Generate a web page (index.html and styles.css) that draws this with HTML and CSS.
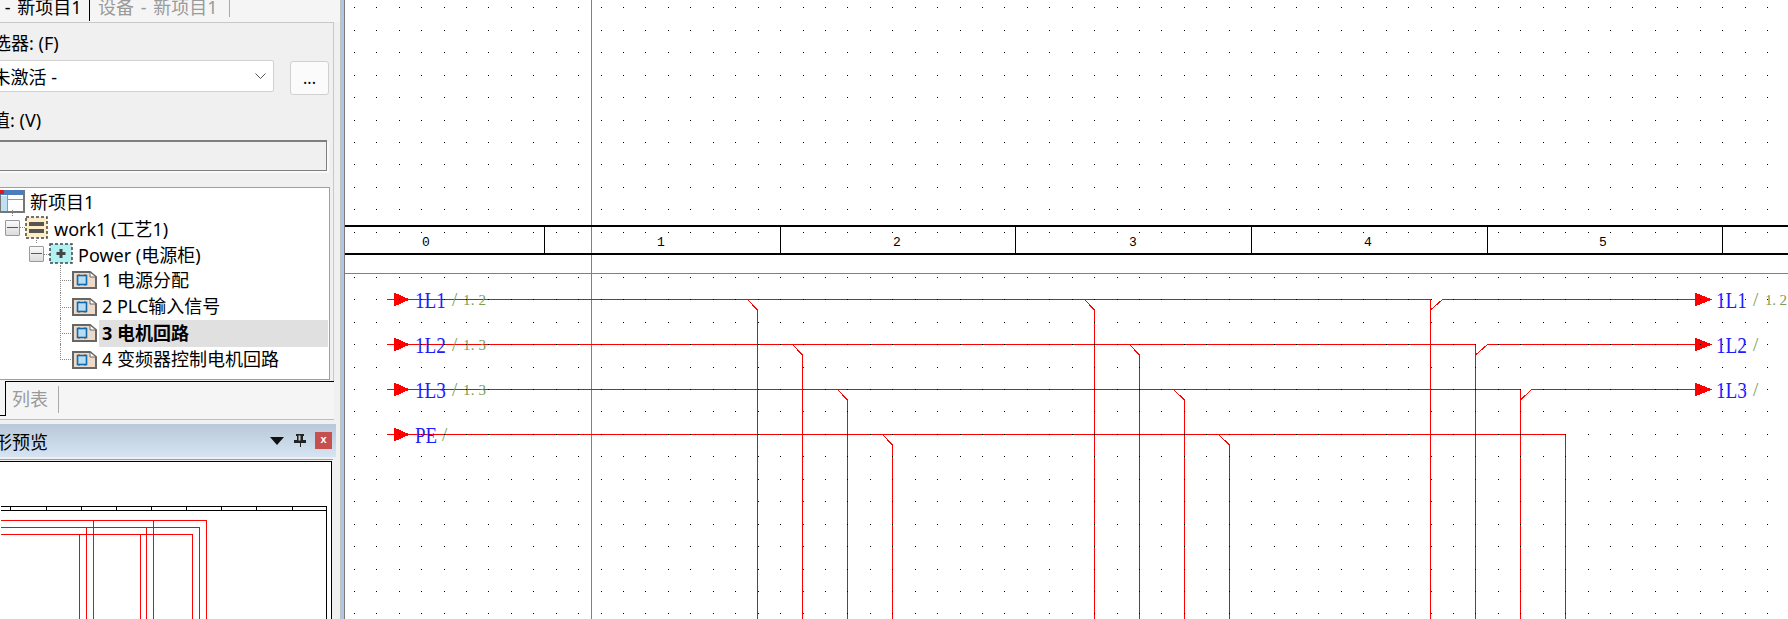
FILE: index.html
```html
<!DOCTYPE html>
<html lang="zh">
<head>
<meta charset="utf-8">
<title>电机回路</title>
<link rel="stylesheet" href="styles.css">
</head>
<body>

<div class="app">
  <div class="side">
    <div class="tabs">
      <span class="tab tab-on">项目 - 新项目1</span>
      <span class="tab tab-off">设备 - 新项目1</span>
    </div>

    <div class="panel">
      <div class="label label-filter">筛选器: (F)</div>
      <div class="filter-row">
        <div class="select">
          <span>- 未激活 -</span>
          <svg class="chevron" width="11" height="7" viewBox="0 0 11 7"><path d="M0.5 0.5 L5.5 5.5 L10.5 0.5" fill="none" stroke="#555"/></svg>
        </div>
        <button class="more">...</button>
      </div>
      <div class="label label-value">数值: (V)</div>
      <div class="value-box"></div>

      <div class="tree">
        <div class="row row-root">
          <svg class="icon-root" width="25" height="23" viewBox="0 0 25 23">
            <rect x="0" y="1" width="24" height="21" fill="#fff" stroke="#777" stroke-width="2"/>
            <rect x="0" y="0" width="24" height="5" fill="#4a7dba"/>
            <rect x="0" y="0" width="4" height="4" fill="#e8141c"/>
            <rect x="1" y="6" width="6" height="15" fill="#bfe0f2"/>
            <path d="M7.5 5 V21 M8 9.5 H23" stroke="#999" fill="none"/>
          </svg>
          <span>新项目1</span>
        </div>
        <div class="row row-work">
          <span class="toggle"><i></i></span>
          <svg class="icon-box" width="23" height="23" viewBox="0 0 23 23">
            <rect x="1" y="1" width="21" height="21" fill="#fdeec6" stroke="#444" stroke-width="1.5" stroke-dasharray="3 2"/>
            <rect x="4" y="6" width="15" height="4" fill="#555"/>
            <rect x="4" y="13" width="15" height="4" fill="#555"/>
          </svg>
          <span>work1 (工艺1)</span>
        </div>
        <div class="row row-power">
          <span class="toggle"><i></i></span>
          <svg class="icon-box" width="24" height="21" viewBox="0 0 24 21">
            <rect x="1" y="1" width="22" height="19" fill="#b2f1f2" stroke="#444" stroke-width="1.5" stroke-dasharray="3 2"/>
            <path d="M12 6 V15 M7.5 10.5 H16.5" stroke="#444" stroke-width="3" fill="none"/>
          </svg>
          <span>Power (电源柜)</span>
        </div>
        <div class="row row-page">
          <svg class="icon-page" width="25" height="18" viewBox="0 0 25 18"><use href="#page"/></svg>
          <span class="row-text">1 电源分配</span>
        </div>
        <div class="row row-page">
          <svg class="icon-page" width="25" height="18" viewBox="0 0 25 18"><use href="#page"/></svg>
          <span class="row-text">2 PLC输入信号</span>
        </div>
        <div class="row row-page row-current">
          <svg class="icon-page" width="25" height="18" viewBox="0 0 25 18"><use href="#page"/></svg>
          <span class="row-text">3 电机回路</span>
        </div>
        <div class="row row-page row-last">
          <svg class="icon-page" width="25" height="18" viewBox="0 0 25 18"><use href="#page"/></svg>
          <span class="row-text">4 变频器控制电机回路</span>
        </div>
      </div>
    </div>

    <div class="strip">
      <div class="strip-stub"></div>
      <div class="strip-tabs"><span class="strip-tab">列表</span></div>
    </div>

    <div class="titlebar">
      <span class="title">图形预览</span>
      <svg class="title-drop" width="14" height="10" viewBox="0 0 14 10"><path d="M0 1 H14 L7 9 Z" fill="#111"/></svg>
      <svg class="title-pin" width="12" height="13" viewBox="0 0 12 13"><path d="M2.5 0.5 H9.5 V1.5 H8.5 V6.5 H11.5 V8.5 H0.5 V6.5 H3.5 V1.5 H2.5 Z M6 8.5 V13" fill="#222" stroke="#222" shape-rendering="crispEdges"/><rect x="4.5" y="1.5" width="2" height="5" fill="#bcccdb"/></svg>
      <span class="title-close">x</span>
    </div>

    <div class="preview">
      <svg class="preview-svg" width="332" height="158" viewBox="0 461 332 158" shape-rendering="crispEdges">
        <path d="M0 506 H328.5 V619 M0 509.5 H328.5" fill="none" stroke="#000"/>
        <path d="M10.5 506 V509 M46.5 506 V509 M81.5 506 V509 M116.5 506 V509 M151.5 506 V509 M187.5 506 V509 M222.5 506 V509 M257.5 506 V509 M293.5 506 V509" fill="none" stroke="#000"/>
        <path d="M0 519.5 H207.5 V619 M0 526.5 H200.5 V619 M0 533.5 H193.5 V619 M79.5 534 V619 M86.5 527 V619 M93.5 520 V619 M140.5 534 V619 M146.5 527 V619 M153.5 520 V619" fill="none" stroke="#f00"/>
      </svg>
    </div>
  </div>

  <div class="splitter"></div>

  <div class="sheet">
    <svg id="sheet" class="sheet-svg" width="1443" height="619" viewBox="345 0 1443 619" shape-rendering="crispEdges">
      <!-- cursor cross -->
      <path d="M345 273.5 H1788 M591.5 0 V619" stroke="#808080" fill="none"/>

      <!-- column header -->
      <path d="M345 226 H1788 M345 254 H1788" stroke="#000" stroke-width="2" fill="none"/>
      <path d="M544.5 227 V253 M780.5 227 V253 M1015.5 227 V253 M1251.5 227 V253 M1487.5 227 V253 M1722.5 227 V253" stroke="#000" fill="none"/>
      <g class="col-num" text-anchor="middle">
        <text x="426" y="246">0</text>
        <text x="661" y="246">1</text>
        <text x="897" y="246">2</text>
        <text x="1133" y="246">3</text>
        <text x="1368" y="246">4</text>
        <text x="1603" y="246">5</text>
      </g>

      <!-- power rails -->
      <g fill="none" stroke="#f00">
        <path d="M387 299.5 H1430.5 V619 M387 344.5 H1475.5 V619 M387 389.5 H1520.5 V619 M387 434.5 H1565.5 V619"/>
        <path d="M1442 299.5 H1695 M1487 344.5 H1695 M1531 389.5 H1695"/>
        <path d="M1430.5 310 L1442.5 299.5 M1475.5 355 L1487.5 344.5 M1520.5 400 L1531.5 389.5"/>
        <path d="M757.5 310 V619 M802.5 355 V619 M847.5 400 V619 M892.5 445 V619 M1094.5 310 V619 M1139.5 355 V619 M1184.5 400 V619 M1229.5 445 V619"/>
        <path d="M747.5 299.5 L757.5 310 M792.5 344.5 L802.5 355 M837.5 389.5 L847.5 400 M882.5 434.5 L892.5 445 M1084.5 299.5 L1094.5 310 M1129.5 344.5 L1139.5 355 M1173.5 389.5 L1184.5 400 M1218.5 434.5 L1229.5 445"/>
      </g>
      <g fill="#f00">
        <path d="M394 292.5 L410 299.5 L394 306.5 Z M394 337.5 L410 344.5 L394 351.5 Z M394 382.5 L410 389.5 L394 396.5 Z M394 427.5 L410 434.5 L394 441.5 Z"/>
        <path d="M1695 292.5 L1712 299.5 L1695 306.5 Z M1695 337.5 L1712 344.5 L1695 351.5 Z M1695 382.5 L1712 389.5 L1695 396.5 Z"/>
      </g>

      <!-- rail names -->
      <g class="rail-name">
        <text x="415" y="308" textLength="31" lengthAdjust="spacingAndGlyphs">1L1</text>
        <text x="415" y="353" textLength="31" lengthAdjust="spacingAndGlyphs">1L2</text>
        <text x="415" y="398" textLength="31" lengthAdjust="spacingAndGlyphs">1L3</text>
        <text x="415" y="443" textLength="22" lengthAdjust="spacingAndGlyphs">PE</text>
        <text x="1716" y="308" textLength="31" lengthAdjust="spacingAndGlyphs">1L1</text>
        <text x="1716" y="353" textLength="31" lengthAdjust="spacingAndGlyphs">1L2</text>
        <text x="1716" y="398" textLength="31" lengthAdjust="spacingAndGlyphs">1L3</text>
      </g>
      <g class="rail-slash">
        <text x="452" y="306">/</text>
        <text x="452" y="351">/</text>
        <text x="452" y="396">/</text>
        <text x="442" y="441">/</text>
        <text x="1753" y="306">/</text>
        <text x="1753" y="351">/</text>
        <text x="1753" y="396">/</text>
      </g>
      <g class="rail-ref">
        <text x="463" y="305" textLength="23">1. 2</text>
        <text x="463" y="350" textLength="23">1. 3</text>
        <text x="463" y="395" textLength="23">1. 3</text>
        <text x="1765" y="305" textLength="22">1. 2</text>
      </g>
    </svg>
  </div>
</div>

<svg class="defs" width="0" height="0">
  <defs>
    <g id="page">
      <path d="M1 1 H18 L24 6 V17 H1 Z" fill="#ecdacb" stroke="#666" stroke-width="2"/>
      <path d="M18 1 V6 H24 Z" fill="#fff" stroke="#666"/>
      <rect x="6" y="3" width="2" height="12" fill="#f08a3c"/>
      <rect x="12" y="3" width="2" height="12" fill="#f08a3c"/>
      <rect x="5.5" y="4.5" width="9" height="9" fill="#b9dcf0" stroke="#0a6cb5" stroke-width="1.6"/>
    </g>
  </defs>
</svg>

<script src="script.js"></script>

</body>
</html>
```

FILE: styles.css
```css
* {
    box-sizing: border-box;
}

html, body {
    margin: 0;
    height: 100%;
    overflow: hidden;
}

body {
    background-color: #fff;
    font-family: "Noto Sans", "Noto Sans CJK SC", sans-serif;
    font-size: 18px;
    color: #000;
}

.app {
    display: flex;
    width: 1788px;
    height: 619px;
}

.side {
    display: flex;
    flex-direction: column;
    width: 340px;
    height: 619px;
    flex: none;
    overflow: hidden;
    background-color: #f0f0f0;
}

.splitter {
    width: 5px;
    flex: none;
    background-color: #aec7e8;
    border-left: 1px solid #c0c0c0;
    border-right: 1px solid #7a7a7a;
}

.sheet {
    flex: 1;
    overflow: hidden;
}

.sheet-svg {
    display: block;
}

.defs {
    display: block;
    height: 0;
}

/* project tabs */
.tabs {
    display: flex;
    height: 22px;
    flex: none;
    overflow: hidden;
    background-color: #f5f5f5;
}

.tab {
    height: 21px;
    line-height: 14px;
    word-spacing: 2px;
    white-space: nowrap;
    flex: none;
}

.tab-on {
    width: 128px;
    margin-left: -38px;
    border-right: 1px solid #000;
}

.tab-off {
    width: 140px;
    height: 17px;
    padding-left: 8px;
    color: #9a9a9a;
    border-right: 1px solid #aaa;
}

/* filter panel */
.panel {
    width: 334px;
    height: 359px;
    flex: none;
    border-top: 1px solid #c8c8c8;
    border-right: 1px solid #c8c8c8;
    padding-top: 8px;
}

.label {
    height: 24px;
    line-height: 24px;
    white-space: nowrap;
}

.label-filter {
    margin-left: -25px;
}

.label-value {
    margin-top: 13px;
    margin-left: -26px;
}

.filter-row {
    display: flex;
    height: 35px;
    margin-top: 5px;
    align-items: flex-start;
}

.select {
    display: flex;
    align-items: center;
    width: 304px;
    height: 32px;
    margin-left: -30px;
    padding: 0 7px 0 11px;
    background-color: #fff;
    border: 1px solid #d0d0d0;
    border-radius: 2px;
    white-space: nowrap;
}

.chevron {
    margin-left: auto;
}

.more {
    width: 39px;
    height: 34px;
    margin-left: 16px;
    margin-top: 1px;
    padding: 0;
    background-color: #fbfbfb;
    border: 1px solid #d0d0d0;
    border-radius: 3px;
    font-family: inherit;
    font-size: 16px;
    line-height: 30px;
}

.value-box {
    width: 331px;
    height: 31px;
    margin-top: 8px;
    margin-left: -4px;
    background-color: #f0f0f0;
    border: 1px solid #7f7f7f;
    border-top-width: 2px;
    box-shadow: 2px 2px 0 #fafafa;
}

/* tree */
.tree {
    width: 334px;
    height: 193px;
    margin-top: 16px;
    margin-left: -4px;
    background-color: #fff;
    border: 1px solid #a0a0a0;
}

.row {
    position: relative;
    display: flex;
    align-items: center;
    height: 26.4px;
    white-space: nowrap;
}

.row-root {
    padding-left: 3px;
}

.row-root svg {
    margin-right: 5px;
}

.row-work {
    padding-left: 8px;
}

.row-power {
    padding-left: 32px;
}

.row-page {
    padding-left: 75px;
}

.toggle {
    display: flex;
    align-items: center;
    justify-content: center;
    width: 15px;
    height: 16px;
    margin-right: 5px;
    background: linear-gradient(#fafafa, #dcdcdc);
    border: 1px solid #999;
    border-radius: 1px;
    flex: none;
}

.toggle i {
    display: block;
    width: 11px;
    height: 1px;
    background-color: #2f5fa8;
}

.icon-box {
    margin-right: 6px;
    flex: none;
}

.row-power .icon-box {
    margin-right: 5px;
}

.icon-page {
    flex: none;
}

.row-text {
    flex: 1;
    height: 27px;
    line-height: 27px;
    margin-left: 2px;
    padding-left: 3px;
    margin-right: 1px;
}

.row-current .row-text {
    background-color: #e0e0e0;
    font-weight: 700;
}

/* dotted connectors of the tree */
.row-work::before, .row-power::before {
    content: "";
    position: absolute;
    top: -4px;
    height: 6px;
    border-left: 1px dotted #888;
}

.row-work::before {
    left: 15px;
}

.row-power::before {
    left: 39px;
}

.row-work::after, .row-power::after {
    content: "";
    position: absolute;
    top: 13px;
    width: 6px;
    border-top: 1px dotted #888;
}

.row-work::after {
    left: 22px;
}

.row-power::after {
    left: 46px;
}

.row-page::before {
    content: "";
    position: absolute;
    left: 63px;
    top: -2px;
    height: 28px;
    border-left: 1px dotted #888;
}

.row-last::before {
    height: 16px;
}

.row-page::after {
    content: "";
    position: absolute;
    left: 63px;
    top: 13px;
    width: 11px;
    border-top: 1px dotted #888;
}

/* list tab strip */
.strip {
    display: flex;
    width: 334px;
    height: 39px;
    flex: none;
    background-color: #f5f5f5;
    border-bottom: 1px solid #bdbdbd;
}

.strip-stub {
    width: 5px;
    height: 35px;
    border-bottom: 1px solid #000;
}

.strip-tabs {
    flex: 1;
    height: 35px;
    padding-top: 4px;
    border-top: 1px solid #000;
    border-left: 1px solid #000;
}

.strip-tab {
    display: block;
    width: 53px;
    height: 27px;
    padding-left: 6px;
    line-height: 27px;
    color: #9a9a9a;
    border-right: 1px solid #aaa;
}

/* preview title */
.titlebar {
    display: flex;
    align-items: center;
    width: 336px;
    height: 33px;
    margin-top: 4px;
    flex: none;
    background: linear-gradient(#b8c8d8, #d6e4f2);
    white-space: nowrap;
}

.title {
    margin-left: -24px;
    width: 294px;
    flex: none;
}

.title-drop {
    flex: none;
}

.title-pin {
    margin-left: 10px;
    flex: none;
}

.title-close {
    display: block;
    width: 17px;
    height: 17px;
    margin-left: 9px;
    background-color: #c65050;
    color: #fff;
    font-family: "Liberation Sans", sans-serif;
    font-size: 11px;
    font-weight: 700;
    line-height: 15px;
    text-align: center;
    flex: none;
}

.preview {
    width: 333px;
    flex: 1;
    margin-top: 2px;
    padding-top: 1px;
    border-top: 1px solid #9c9c9c;
}

.preview-svg {
    display: block;
    background-color: #fff;
    border-top: 1px solid #000;
    border-right: 1px solid #000;
}

/* sheet texts */
.col-num text {
    font-family: "Liberation Mono", monospace;
    font-size: 13px;
    fill: #000;
}

.rail-name text {
    font-family: "Liberation Serif", serif;
    font-size: 23px;
    fill: #1c1cff;
}

.rail-slash text {
    font-family: "Liberation Serif", serif;
    font-size: 19px;
    fill: #7c9c55;
}

.rail-ref text {
    font-family: "Liberation Serif", serif;
    font-size: 15px;
    fill: #7c9c55;
}
```

FILE: script.js
```js
// grid of the drawing sheet, one pixel per dot, on top of the wires
const stepX = 22.43;
const stepY = 22.45;
let d = "";

for (let j = 0; j < 28; j++) {
    const y = Math.round(7.3 + j * stepY);
    for (let i = 0; i < 65; i++) {
        const x = Math.round(353.9 + i * stepX);
        d += `M${x} ${y}h1v1h-1z`;
    }
}

const dots = document.createElementNS("http://www.w3.org/2000/svg", "path");
dots.setAttribute("d", d);
dots.setAttribute("fill", "#000");
document.getElementById("sheet").appendChild(dots);
```
